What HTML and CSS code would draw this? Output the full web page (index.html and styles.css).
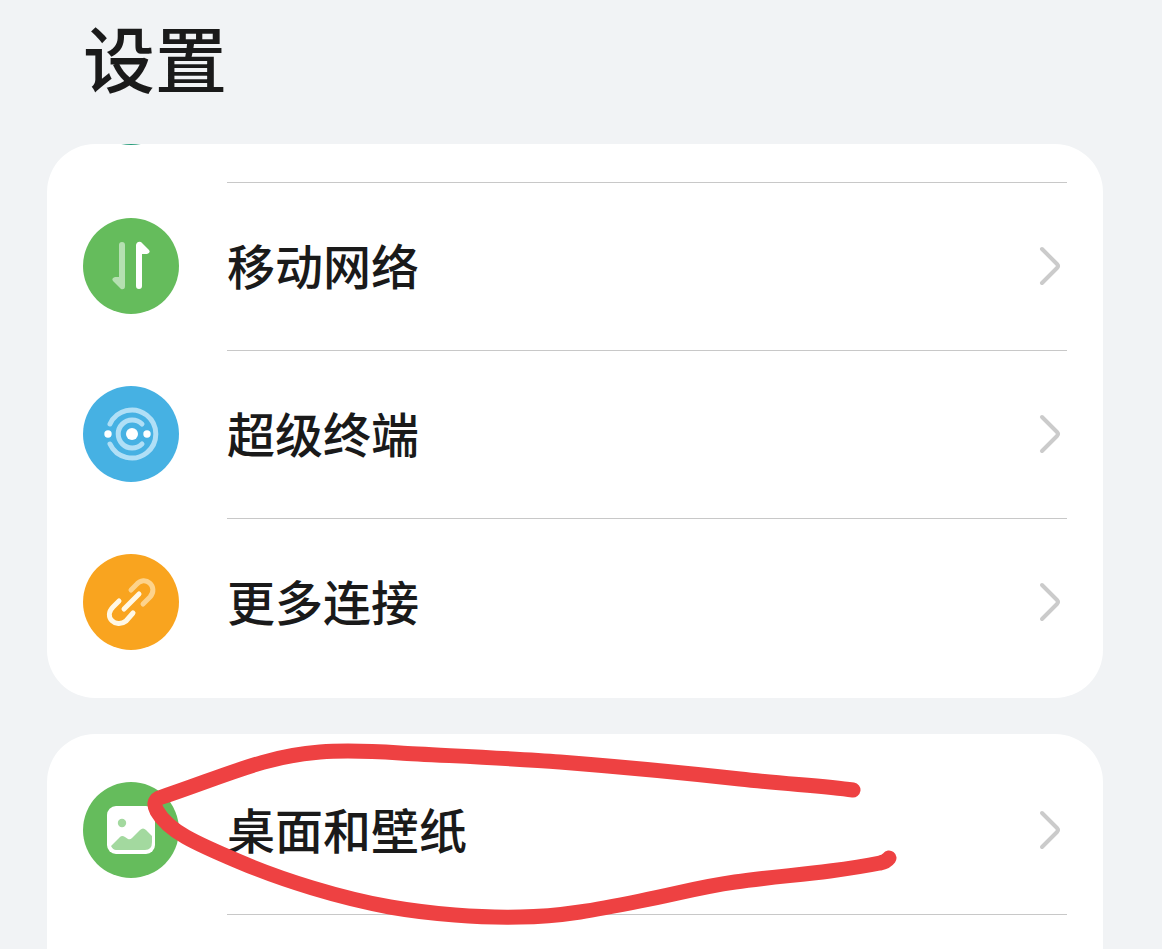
FILE: index.html
```html
<!DOCTYPE html>
<html lang="zh-CN">
  <head>
    <meta charset="utf-8">
    <meta name="viewport" content="width=device-width, initial-scale=1.0">
    <title>设置</title>
    <link rel="stylesheet" href="styles.css">
  </head>

  <body>
    <h1 class="title">设置</h1>

    <ul class="card">
      <!-- row scrolled under the top edge -->
      <li class="peek">
        <span class="icon teal"></span>
      </li>
      <li>
        <a class="row" href="#">
          <svg class="icon green" viewBox="0 0 96 96" aria-hidden="true">
            <path class="faded" d="M36 27a3 3 0 0 1 6 0v41q0 4-4 3l-8-8q-2-3 2-4h4z"/>
            <path fill="#fff" d="M53 27q1-4 5-3l8 8q2 3-2 4h-5v32a3 3 0 0 1-6 0z"/>
          </svg>
          <span class="line"><span class="label">移动网络</span>
            <svg class="arrow" viewBox="0 0 32 48" aria-hidden="true"><path d="M7 6 22 21Q24 23 22 25L7 40"/></svg>
          </span>
        </a>
      </li>
      <li>
        <a class="row" href="#">
          <svg class="icon blue" viewBox="0 0 96 96" aria-hidden="true">
            <g class="rings">
              <path d="M27 38A24 24 0 1 1 27 58"/>
              <path d="M59 38A14 14 0 1 0 59 58"/>
            </g>
            <circle cx="49" cy="48" r="6" fill="#fff"/>
            <circle cx="25" cy="48" r="3.700" fill="#fff"/>
            <circle cx="64" cy="48" r="3.700" fill="#fff"/>
          </svg>
          <span class="line"><span class="label">超级终端</span>
            <svg class="arrow" viewBox="0 0 32 48" aria-hidden="true"><path d="M7 6 22 21Q24 23 22 25L7 40"/></svg>
          </span>
        </a>
      </li>
      <li>
        <a class="row" href="#">
          <svg class="icon orange" viewBox="0 0 96 96" aria-hidden="true">
            <g class="link">
              <path class="dim" d="M48 36l5-5C62 20 76 33 67 43l-7 7"/>
              <path d="M36 47l-6 6C20 63 33 75 43 67l7-8M41 55l15-15"/>
            </g>
          </svg>
          <span class="line"><span class="label">更多连接</span>
            <svg class="arrow" viewBox="0 0 32 48" aria-hidden="true"><path d="M7 6 22 21Q24 23 22 25L7 40"/></svg>
          </span>
        </a>
      </li>
    </ul>

    <ul class="card last">
      <li>
        <a class="row first" href="#">
          <svg class="icon green" viewBox="0 0 96 96" aria-hidden="true">
            <rect x="24" y="24" width="48" height="48" rx="9" fill="#fff"/>
            <circle cx="39" cy="41" r="4.200" fill="#a3d99f"/>
            <path fill="#a3d99f" d="M28 64l9-9q2-2 5 0l3 2q2 1 4-1l8-8q3-3 6 0l6 6v6q0 8-7 8H33q-3 0-5-4z"/>
          </svg>
          <span class="line"><span class="label">桌面和壁纸</span>
            <svg class="arrow" viewBox="0 0 32 48" aria-hidden="true"><path d="M7 6 22 21Q24 23 22 25L7 40"/></svg>
          </span>
        </a>
      </li>
      <li class="row next">
        <span class="line"></span>
        <!-- red pen mark -->
        <svg class="mark" viewBox="47 734 1056 215" aria-hidden="true">
          <path d="M853 790C825 786 785 784 740 779S610 766 560 762S430 755 400 753S345 750 320 752C265 756 225 776 159 798Q152 802 157 811C168 831 195 843 240 862C282 880 340 898 390 907C430 914 480 918 520 917C560 917 600 909 640 901S700 887 735 882S800 875 830 871S865 866 880 863Q886 862 889 858"/>
        </svg>
      </li>
    </ul>
  </body>
</html>
```
FILE: styles.css
```css
* {
    box-sizing: border-box;
}
body {
    margin: 0;
    padding: 0 59px 0 47px;
    min-height: 100vh;
    display: flex;
    flex-direction: column;
    background: #f1f3f5;
    color: #1a1a1a;
    font-family: "Noto Sans CJK SC", sans-serif;
    font-weight: 500;
}
.title {
    margin: 0 0 32px;
    padding-left: 36px;
    font-size: 72px;
    line-height: 112px;
    font-weight: 500;
}
.card {
    position: relative;
    margin: 0 0 36px;
    padding: 0 36px 12px;
    list-style: none;
    background: #fff;
    border-radius: 48px;
    overflow: hidden;
}
.card.last {
    flex: 1;
    margin: 0;
    padding: 12px 36px 0;
    border-radius: 48px 48px 0 0;
}
.peek {
    display: flex;
    align-items: flex-end;
    height: 38px;
    padding-bottom: 37px;
    overflow: hidden;
}
.row {
    display: flex;
    align-items: center;
    gap: 48px;
    height: 168px;
    color: inherit;
    text-decoration: none;
}
.icon {
    flex: none;
    width: 96px;
    height: 96px;
    border-radius: 50%;
}
.green { background: #65bc5c; }
.blue { background: #46b1e3; }
.orange { background: #f9a41f; }
.teal { background: #2a9d7c; }

.line {
    flex: 1;
    display: flex;
    align-items: center;
    justify-content: space-between;
    height: 100%;
    border-top: 1px solid #c8c8c8;
}
.first .line {
    border-top-color: transparent;
}
.label {
    padding-bottom: 5px;
    font-size: 48px;
    line-height: 72px;
}
.next {
    height: 35px;
    padding-left: 144px;
}
.arrow {
    width: 32px;
    height: 48px;
    fill: none;
    stroke: #cbcbcb;
    stroke-width: 4;
    stroke-linecap: round;
    stroke-linejoin: round;
}

/* icon parts */
.faded {
    fill: #b5e0b1;
}
.rings {
    fill: none;
    stroke: #b0dff6;
    stroke-width: 5;
    stroke-linecap: round;
}
.link {
    fill: none;
    stroke: #fff8e6;
    stroke-width: 5;
    stroke-linecap: round;
    stroke-linejoin: round;
}
.dim {
    stroke: #fdd38c;
}

.mark {
    position: absolute;
    left: 0;
    top: 0;
    width: 1056px;
    height: 215px;
    fill: none;
    stroke: #ee4142;
    stroke-width: 15;
    stroke-linecap: round;
    stroke-linejoin: round;
    pointer-events: none;
}
```
